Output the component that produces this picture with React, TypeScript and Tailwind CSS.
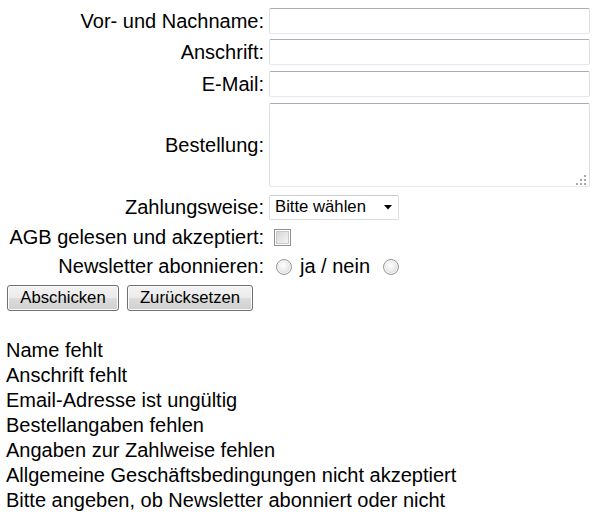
import React from "react";

const inputCls =
  "w-[321px] h-[26px] bg-white border border-[#dbdfe6] border-t-[#abadb3] border-b-[#e3e9ef] rounded-[2px] outline-none";

function Row({
  label,
  h,
  mt,
  children,
}: {
  label: string;
  h: string;
  mt: string;
  children: React.ReactNode;
}) {
  return (
    <div className={`flex items-center ${h} ${mt}`}>
      <div className="w-[264px] shrink-0 text-right text-[20px] leading-[23px] whitespace-nowrap">
        {label}
      </div>
      <div className="ml-[5px] flex items-center">{children}</div>
    </div>
  );
}

function Radio() {
  return (
    <div className="w-[16px] h-[16px] rounded-full border border-[#9a9a9a] bg-[radial-gradient(circle_at_45%_40%,#ffffff_0%,#ececec_45%,#c9c9c9_100%)] shadow-[inset_0_0_0_1px_#f4f4f4]" />
  );
}

const btnCls =
  "h-[26px] rounded-[3px] border border-[#707070] bg-[linear-gradient(#f2f2f2,#ebebeb_50%,#dddddd_50%,#cfcfcf)] shadow-[inset_0_0_0_1px_#fbfbfb] text-[16.7px] leading-none text-black flex items-center justify-center";

export default function App() {
  const errors = [
    "Name fehlt",
    "Anschrift fehlt",
    "Email-Adresse ist ungültig",
    "Bestellangaben fehlen",
    "Angaben zur Zahlweise fehlen",
    "Allgemeine Geschäftsbedingungen nicht akzeptiert",
    "Bitte angeben, ob Newsletter abonniert oder nicht",
  ];
  return (
    <div className="w-[597px] h-[517px] bg-white text-black font-[family-name:'Liberation_Sans',Arial,sans-serif] overflow-hidden pt-[8px]">
      <Row label="Vor- und Nachname:" h="h-[26px]" mt="mt-0">
        <input className={inputCls} />
      </Row>
      <Row label="Anschrift:" h="h-[26px]" mt="mt-[5px]">
        <input className={inputCls} />
      </Row>
      <Row label="E-Mail:" h="h-[26px]" mt="mt-[6px]">
        <input className={inputCls} />
      </Row>
      <Row label="Bestellung:" h="h-[84px]" mt="mt-[6px]">
        <div className="relative w-[321px] h-[84px]">
          <textarea className="block w-full h-full resize-none bg-white border border-[#dbdfe6] border-t-[#abadb3] border-b-[#e3e9ef] rounded-[2px] outline-none" />
          <svg
            className="absolute right-[4px] bottom-[2px]"
            width="10"
            height="10"
            viewBox="0 0 10 10"
          >
            <rect x="8" y="0" width="2" height="2" fill="#a8a8a8" />
            <rect x="4" y="4" width="2" height="2" fill="#a8a8a8" />
            <rect x="8" y="4" width="2" height="2" fill="#a8a8a8" />
            <rect x="0" y="8" width="2" height="2" fill="#a8a8a8" />
            <rect x="4" y="8" width="2" height="2" fill="#a8a8a8" />
            <rect x="8" y="8" width="2" height="2" fill="#a8a8a8" />
          </svg>
        </div>
      </Row>
      <Row label="Zahlungsweise:" h="h-[25px]" mt="mt-[8px]">
        <div className="w-[130px] h-[25px] bg-white border border-[#dbdfe6] border-t-[#c9ccd2] rounded-[2px] flex items-center justify-between pl-[5px] pr-[6px]">
          <span className="text-[16.7px] leading-none">Bitte wählen</span>
          <svg width="8" height="5" viewBox="0 0 8 5">
            <path d="M0 0H8L4 4.5Z" fill="#000" />
          </svg>
        </div>
      </Row>
      <Row label="AGB gelesen und akzeptiert:" h="h-[17px]" mt="mt-[9px]">
        <div className="ml-[5px] w-[17px] h-[17px] border border-[#8f8f8f] bg-white p-[1px]">
          <div className="w-full h-full border border-[#c9c9c9] bg-[linear-gradient(135deg,#d6d6d6,#f4f4f4)]" />
        </div>
      </Row>
      <Row label="Newsletter abonnieren:" h="h-[17px]" mt="mt-[12px]">
        <div className="ml-[7px] flex items-center">
          <Radio />
          <span className="ml-[8px] text-[20px] leading-[23px]">ja / nein</span>
          <div className="ml-[13px]">
            <Radio />
          </div>
        </div>
      </Row>
      <div className="flex mt-[10px] ml-[7px] gap-[8px]">
        <button className={`${btnCls} w-[112px]`}>Abschicken</button>
        <button className={`${btnCls} w-[126px]`}>Zurücksetzen</button>
      </div>
      <div className="mt-[27px] ml-[6px] text-[20px] leading-[25px]">
        {errors.map((e) => (
          <div key={e}>{e}</div>
        ))}
      </div>
    </div>
  );
}
